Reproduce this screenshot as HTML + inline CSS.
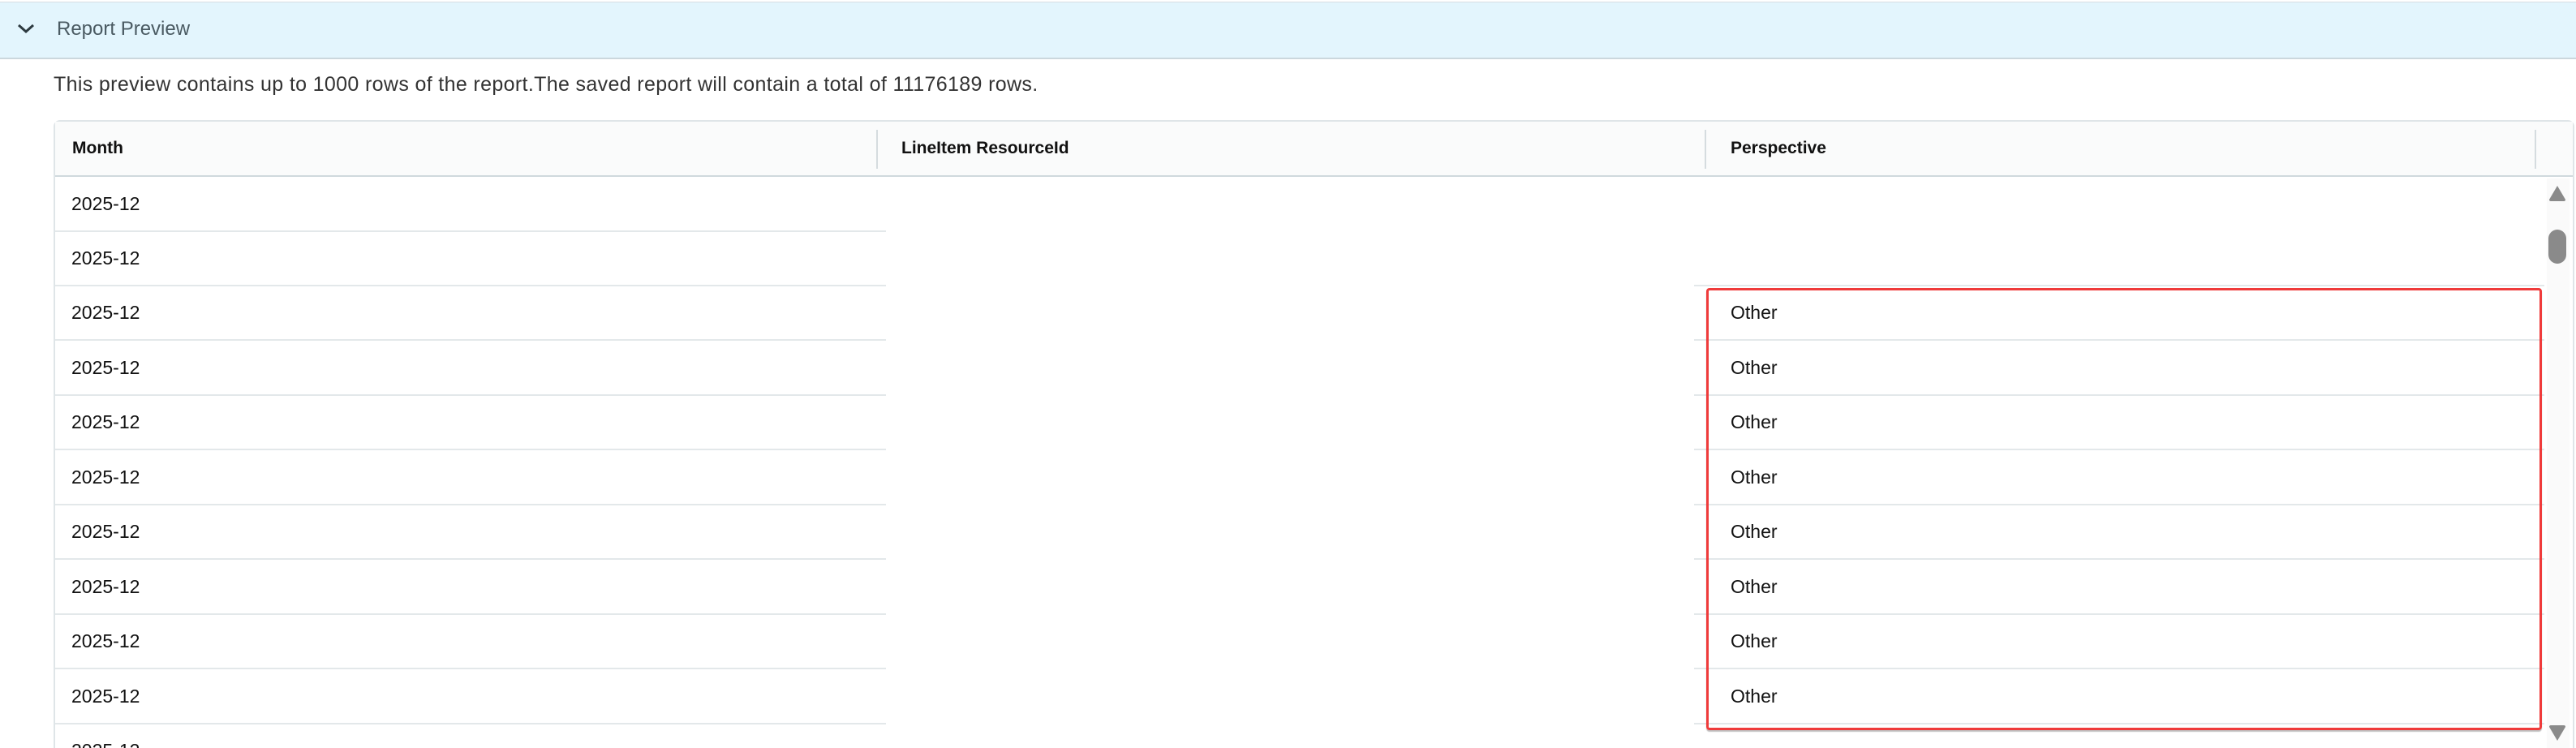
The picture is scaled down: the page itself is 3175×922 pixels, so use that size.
<!DOCTYPE html>
<html><head><meta charset="utf-8"><style>
*{margin:0;padding:0;box-sizing:border-box}
html{width:3175px;height:922px;overflow:hidden}
body{width:3175px;height:922px;background:#fff;position:relative;overflow:hidden;font-family:"Liberation Sans",sans-serif}
.a{position:absolute}
.band{left:0;top:2px;width:3175px;height:71px;background:#e3f5fd;border-top:1px solid #d7dee2;border-bottom:2px solid #cbd7dd}
.title{left:70px;top:20px;font-size:24px;color:#4a5a62;line-height:32px}
.desc{left:66px;top:88px;font-size:25px;color:#333;line-height:32px;letter-spacing:0.35px}
.tbl{left:66px;top:148px;width:3107px;height:790px;border:2px solid #dfe5e8;border-radius:8px;background:#fff}
.hdr{left:68px;top:150px;width:3103px;height:68px;background:#fafbfb;border-bottom:2px solid #cfd9dd}
.hs{width:2px;height:48px;top:160px;background:#d5dcdf}
.ht{top:168px;font-size:21px;font-weight:bold;color:#111;line-height:30px}
.c{font-size:23px;color:#111;line-height:30px}
.ln{height:2px;background:#e3e8ea}
.red{left:2103px;top:355px;width:1030px;height:545px;border:3px solid #ef3b3b;border-radius:4px;box-shadow:0 2px 1px rgba(0,0,0,0.25)}
.sb{left:3139px;top:220px;width:28px;height:702px;background:#fafafa}
</style></head><body>
<div class="a band"></div>
<svg class="a" style="left:20px;top:26px" width="24" height="18" viewBox="0 0 24 18"><path d="M3 5 L12 13 L21 5" fill="none" stroke="#2d3a40" stroke-width="3"/></svg>
<div class="a title">Report Preview</div>
<div class="a desc">This preview contains up to 1000 rows of the report.The saved report will contain a total of 11176189 rows.</div>
<div class="a tbl"></div>
<div class="a hdr"></div>
<div class="a hs" style="left:1080px"></div>
<div class="a hs" style="left:2101px"></div>
<div class="a hs" style="left:3124px"></div>
<div class="a ht" style="left:89px">Month</div>
<div class="a ht" style="left:1111px">LineItem ResourceId</div>
<div class="a ht" style="left:2133px">Perspective</div>
<div class="a sb"></div>
<svg class="a" style="left:3140px;top:228px" width="24" height="22" viewBox="0 0 24 22"><path d="M12 1 L22 18 Q22 20 20 20 L4 20 Q2 20 2 18 Z" fill="#8a8a8a"/></svg>
<div class="a" style="left:3141px;top:283px;width:22px;height:42px;border-radius:11px;background:#8a8a8a"></div>
<svg class="a" style="left:3140px;top:893px" width="24" height="22" viewBox="0 0 24 22"><path d="M2 3 Q2 1 4 1 L20 1 Q22 1 22 3 L12 20 Z" fill="#8a8a8a"/></svg>
<div id="rows"></div>
<script>
var h='';var tops=[218,285,352,420,487,555,622,690,757,825,892];
for(var i=0;i<tops.length;i++){var t=tops[i];
h+='<div class="a c" style="left:88px;top:'+(t+18)+'px">2025-12</div>';
if(i<10)h+='<div class="a ln" style="left:68px;width:1024px;top:'+(t+66)+'px"></div>';
if(i>=2&&i<10)h+='<div class="a c" style="left:2133px;top:'+(t+18)+'px">Other</div>';
if(i>=1&&i<10)h+='<div class="a ln" style="left:2088px;width:1048px;top:'+(t+66)+'px"></div>';}
document.getElementById('rows').innerHTML=h;
</script>
<div class="a red"></div>
</body></html>
